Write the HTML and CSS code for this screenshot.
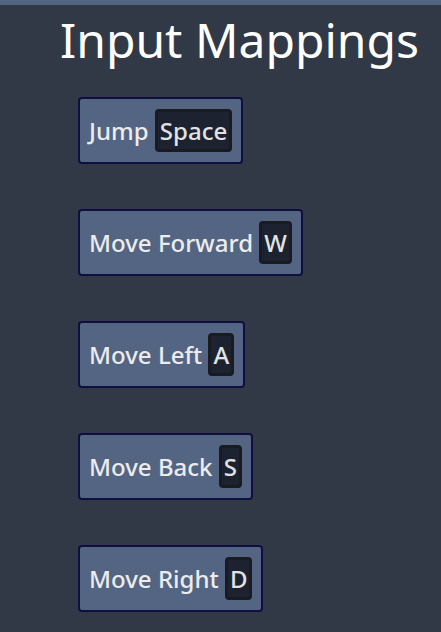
FILE: index.html
```html
<!DOCTYPE html>
<html lang="en">
<head>
    <meta charset="UTF-8">
    <meta name="viewport" content="width=device-width, initial-scale=1.0">
    <title>Input Mappings</title>
    <link rel="stylesheet" href="styles.css">
</head>
<body>
    <div class="top-bar"></div>

    <h1 class="title">Input Mappings</h1>

    <div class="mappings">
        <div class="mapping">Jump <span class="key">Space</span></div>
        <div class="mapping">Move Forward <span class="key">W</span></div>
        <div class="mapping">Move Left <span class="key">A</span></div>
        <div class="mapping">Move Back <span class="key">S</span></div>
        <div class="mapping">Move Right <span class="key">D</span></div>
    </div>
</body>
</html>
```

FILE: styles.css
```css
body {
    font-family: "Noto Sans", "Open Sans", sans-serif;
    margin: 0;
    padding: 0;
    background-color: #313846;
    color: #fff;
    height: 632px;
    overflow: hidden;
}

.top-bar {
    height: 5px;
    background-color: #536583;
}

.title {
    font-size: 48px;
    font-weight: 400;
    line-height: 64px;
    margin: 3px 0 0 0;
    padding-left: 60px;
}

.mappings {
    display: flex;
    flex-direction: column;
    align-items: flex-start;
    gap: 45px;
    padding-left: 78px;
    margin-top: 25px;
}

.mapping {
    display: flex;
    align-items: center;
    height: 63px;
    padding: 0 9px 0 9px;
    background-color: #536583;
    border: 2px solid #0e0f3e;
    border-radius: 4px;
    font-size: 24px;
    font-weight: 500;
    color: #ececec;
    white-space: pre;
}

.key {
    display: inline-block;
    height: 37px;
    line-height: 37px;
    padding: 0 2px;
    background-color: #1c2230;
    border: 3px solid #1a1b20;
    border-radius: 4px;
    color: #e2e2e2;
}
```
